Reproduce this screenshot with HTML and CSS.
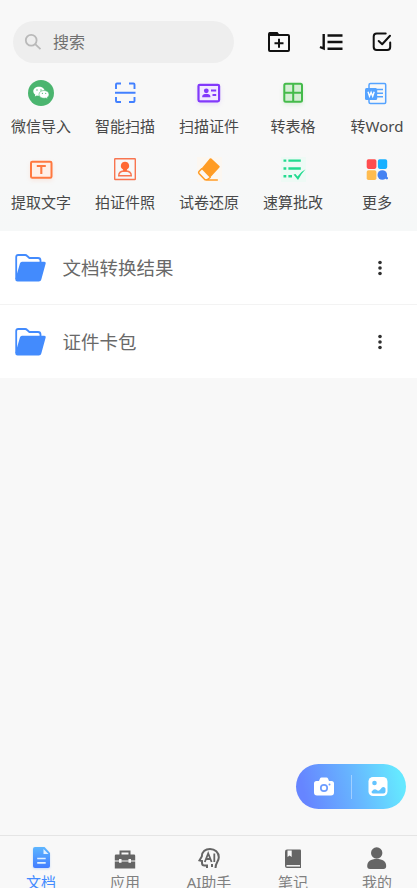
FILE: index.html
```html
<!DOCTYPE html>
<html lang="zh-CN">
<head>
<meta charset="utf-8">
<meta name="viewport" content="width=device-width, initial-scale=1">
<title>文档</title>
<link rel="stylesheet" href="styles.css">
</head>
<body>
<div class="app">
  <header class="top">
    <div class="toolbar">
      <div class="search">
        <svg width="18" height="18" viewBox="0 0 18 18" fill="none" stroke="#b9b9b9" stroke-width="1.8"><circle cx="7.2" cy="7.2" r="5.4"/><path d="M11.2 11.2L16.5 16.2"/></svg>
        <span>搜索</span>
      </div>
      <div class="actions">
        <svg width="24" height="24" viewBox="0 0 24 24" fill="none" stroke="#111" stroke-width="2"><path d="M2 5V20a1 1 0 0 0 1 1H21a1 1 0 0 0 1-1V6a1 1 0 0 0-1-1H11.500L10 3H3a1 1 0 0 0-1 1Z"/><path d="M2 2.500H9.500L12 6H2Z" fill="#111" stroke="none"/><path d="M12 8.700v9M7.500 13.200h9"/></svg>
        <svg width="24" height="24" viewBox="0 0 24 24" fill="none" stroke="#111" stroke-width="2.400"><path d="M4.700 4V18.500L1 17M8.500 5.500H23.500M8.500 12H23.500M8.500 18.700H23.500"/></svg>
        <svg width="24" height="24" viewBox="0 0 24 24" fill="none" stroke="#111" stroke-width="2" stroke-linecap="round" stroke-linejoin="round"><path d="M14.700 3.500H5.700a3 3 0 0 0-3 3v10.500a3 3 0 0 0 3 3H16.200a3 3 0 0 0 3-3V12.500"/><path d="M7.700 11l3.500 3.300L19 5.800"/></svg>
      </div>
    </div>
    <nav class="tools">
      <a class="tool"><svg viewBox="0 0 28 28"><circle cx="14" cy="14" r="13" fill="#4bb56f"/><path d="M12 7.800c-3.300 0-5.700 2-5.700 4.500 0 1.500.8 2.700 2 3.500l-.5 1.700 2-1c.7.200 1.400.3 2.200.3 3.200 0 5.700-2 5.700-4.500S15.200 7.800 12 7.800Z" fill="#fff"/><path d="M17 11.500c-2.900 0-5 1.700-5 3.900s2.100 3.900 5 3.900c.6 0 1.200-.1 1.800-.2l1.800.9-.5-1.500c1.200-.7 1.900-1.800 1.900-3.100 0-2.200-2.200-3.900-5-3.900Z" fill="#fff" stroke="#4bb56f" stroke-width=".6"/><g fill="#4bb56f"><circle cx="10" cy="11" r=".7"/><circle cx="14" cy="11" r=".7"/><circle cx="15.400" cy="14.300" r=".6"/><circle cx="18.700" cy="14.300" r=".6"/></g></svg><span>微信导入</span></a>
      <a class="tool"><svg viewBox="0 0 28 28" fill="none" stroke="#4280ff" stroke-width="1.900"><path d="M5 10V5.500q0-1 1-1h4M18 4.500h4.500q1 0 1 1V10M5 18v4q0 1 1 1h4M18 23h4.500q1 0 1-1v-4M4 13.800H24.500"/></svg><span>智能扫描</span></a>
      <a class="tool"><svg class="glow-purple" viewBox="0 0 28 28"><rect x="3.500" y="5.800" width="20.600" height="16.500" rx="1.300" fill="#f1e9ff" stroke="#8239fb" stroke-width="2.200"/><g fill="#8239fb"><circle cx="11.300" cy="11.800" r="2.400"/><path d="M7.200 18.300v-.8c0-2 1.800-2.500 4.100-2.500s4.100.5 4.100 2.500v.8ZM16 10.500h5.200v2H16ZM17.500 15h3.700v2h-3.700Z"/></g></svg><span>扫描证件</span></a>
      <a class="tool"><svg class="glow-green" viewBox="0 0 28 28" fill="#d5eed5" stroke="#45bb4b" stroke-width="2"><rect x="5.300" y="4.800" width="17.700" height="18" rx="1.500"/><path d="M14.200 5v18M5.500 13.800H23"/></svg><span>转表格</span></a>
      <a class="tool"><svg viewBox="0 0 28 28" fill="none" stroke="#55a3ff" stroke-width="1.500"><path d="M6 9V6q0-1.500 1.500-1.500H21.500q1.200 0 1.200 1.200V23.300q0 1.200-1.200 1.200H7.500Q6 24.500 6 23V20M14 10.600h6M14 14.200h6M14 17.800h6"/><rect x="2" y="9" width="12.200" height="12" rx="1.500" fill="#55a3ff" stroke="none"/><path d="M5 12.800l1.500 4.500 1.600-4 1.600 4 1.500-4.500" stroke="#fff" stroke-width="1.400"/></svg><span>转Word</span></a>
      <a class="tool"><svg class="glow-orange" viewBox="0 0 28 28" stroke="#ff7940"><rect x="4" y="6.800" width="20.500" height="16" rx="1.300" fill="#fff0e8" stroke-width="2"/><path d="M9.800 11h9M14.300 11v8" fill="none" stroke-width="2.100"/></svg><span>提取文字</span></a>
      <a class="tool"><svg viewBox="0 0 28 28" fill="none" stroke="#f87550" stroke-width="1.400"><rect x="3.700" y="3.700" width="20.600" height="20.800" rx=".5"/><path d="M7.700 20.700c0-3 2.200-4.700 6.300-4.700s6.300 1.700 6.300 4.700Z"/><path d="M14 6.700a4.100 4.100 0 0 1 2 7.700l-.4 2.200h-3.200l-.4-2.200a4.100 4.100 0 0 1 2-7.700Z" fill="#ff6934" stroke="none"/></svg><span>拍证件照</span></a>
      <a class="tool"><svg viewBox="0 0 28 28"><rect x="2" y="2" width="25" height="25" fill="#fff7ec" opacity=".6"/><path d="M14.800 3.500q.8-.7 1.600 0l8 7.500q.8.800 0 1.600L15 22.700 6.300 13.700Z" fill="#ff9c24"/><path d="M6.700 13.700L4 16.500q-.8 1 0 2L10 24.800H12L15.200 22.500M11 25H22.300" fill="none" stroke="#ff9c24" stroke-width="1.500" stroke-linecap="round"/></svg><span>试卷还原</span></a>
      <a class="tool"><svg viewBox="0 0 28 28" fill="none" stroke="#22db90" stroke-width="2.400"><rect x="2" y="2" width="25" height="25" fill="#e8fbf3" stroke="none" opacity=".6"/><path d="M4.500 5.600H7.300M9.400 5.600H21.800M4.500 13.500H7.300M9.400 13.500H21.800M4.500 21.300H7.300M9.400 21.300H13"/><path d="M14.500 19.500l2-.5 2 2.600Q21.300 17 26.500 14.300 22 19 19 25Z" fill="#22db90" stroke="none"/></svg><span>速算批改</span></a>
      <a class="tool"><svg viewBox="0 0 28 28"><rect x="3.700" y="4.200" width="9.700" height="9.700" rx="1.800" fill="#ff4d4f"/><rect x="14.900" y="4.200" width="9.300" height="9.700" rx="1.800" fill="#18b0ff"/><rect x="3.700" y="15.300" width="9.700" height="9.700" rx="1.800" fill="#ffbc50"/><circle cx="19.300" cy="20" r="4.800" fill="#4482f2"/><path d="M20.500 22l2.500-1.500 2 2.300q.4 1.700-1.300 1.700Z" fill="#4482f2"/></svg><span>更多</span></a>
    </nav>
  </header>

  <main class="files">
    <div class="file">
      <svg class="folder" viewBox="0 0 32 30"><path d="M2.200 26V4q0-2 2-2h7q1 0 2 1l2.200 2H24q2.500 0 2.500 2.500V11" fill="#fff" stroke="#438bfd" stroke-width="1.800"/><path d="M8 8.700H30q2.200 0 1.600 2L27.300 26.500Q26.800 28.500 24.800 28.500H3.500q-2.200 0-2.200-2L6 10.200Q6.500 8.700 8 8.700Z" fill="#438bfd"/></svg>
      <span class="name">文档转换结果</span>
      <svg class="more" viewBox="0 0 6 16" fill="#303030"><circle cx="3" cy="2.500" r="1.800"/><circle cx="3" cy="8" r="1.800"/><circle cx="3" cy="13.500" r="1.800"/></svg>
    </div>
    <div class="file">
      <svg class="folder" viewBox="0 0 32 30"><path d="M2.200 26V4q0-2 2-2h7q1 0 2 1l2.200 2H24q2.500 0 2.500 2.500V11" fill="#fff" stroke="#438bfd" stroke-width="1.800"/><path d="M8 8.700H30q2.200 0 1.600 2L27.300 26.500Q26.800 28.500 24.800 28.500H3.500q-2.200 0-2.200-2L6 10.200Q6.500 8.700 8 8.700Z" fill="#438bfd"/></svg>
      <span class="name">证件卡包</span>
      <svg class="more" viewBox="0 0 6 16" fill="#303030"><circle cx="3" cy="2.500" r="1.800"/><circle cx="3" cy="8" r="1.800"/><circle cx="3" cy="13.500" r="1.800"/></svg>
    </div>
  </main>

  <div class="capture">
    <svg width="22" height="22" viewBox="0 0 22 22"><path d="M7 2.500Q7.500 1.500 8.500 1.500h5q1 0 1.500 1L16 5h2.500Q21 5 21 7.500v9q0 3-3 3H4q-3 0-3-3v-9Q1 5 3.500 5H6Z" fill="#fff"/><circle cx="11" cy="12" r="3.200" fill="none" stroke="#6c9cff" stroke-width="1.700"/><circle cx="16.500" cy="8.500" r="1" fill="#6c9cff"/></svg>
    <i class="divider"></i>
    <svg width="22" height="22" viewBox="0 0 22 22"><rect x="1.500" y="1" width="19" height="19" rx="4.500" fill="#fff"/><circle cx="7.500" cy="7" r="2.300" fill="#62c4ff"/><path d="M4.500 15.800q2.800-3.800 5.300-1.700 2 1.600 3.900-1.200 2.300-3.500 4.800-.5v3q0 2-2 2H6q-1.500 0-1.500-1.600Z" fill="#62c4ff"/></svg>
  </div>

  <footer class="tabs">
    <a class="tab active"><svg viewBox="0 0 26 26"><defs><linearGradient id="doc" x2="0" y2="1"><stop stop-color="#5db6ff"/><stop offset="1" stop-color="#437dff"/></linearGradient></defs><path d="M7 2h9.500L22 8V21q0 2-2 2H7q-2 0-2-2V4q0-2 2-2Z" fill="url(#doc)"/><path d="M15.500 4v5H20.500Z" fill="#e2f1ff"/><path d="M9.200 13.500h8.500M9.200 17.800h8.500" stroke="#e2f1ff" stroke-width="1.700"/></svg><span>文档</span></a>
    <a class="tab"><svg viewBox="0 0 26 26"><path d="M8.500 10V6.500H17.500V10" fill="none" stroke="#656565" stroke-width="2"/><path d="M4 9.500H22q1.200 0 1.200 1.200V15.500H19V14h-2.500v1.500h-7V14H7v1.500H2.800V10.700Q2.800 9.500 4 9.500ZM2.800 16.500H7v1.200h2.500V16.500h7v1.200H19V16.500h4.200v7H2.800Z" fill="#656565"/></svg><span>应用</span></a>
    <a class="tab"><svg viewBox="0 0 26 26" fill="none" stroke="#656565" stroke-width="2"><path d="M11 23v-2.500H8.500Q6 20.500 6 18V16L3.500 15.300 5.800 11.500C6 6.500 9.500 4 14 4c5 0 8.800 3.500 8.800 8.300 0 4-3.300 5-3.300 10.700M16 19v3"/><path d="M8.800 17l3.400-8.500 3.400 8.500M10.300 14h4M18.300 8.500V17" stroke-width="1.800"/></svg><span>AI助手</span></a>
    <a class="tab"><svg viewBox="0 0 26 26"><path d="M7 4.500H20q1 0 1 1V23H7q-2 0-2-2V6.500q0-2 2-2Z" fill="#656565"/><path d="M7.500 5.500h4.200v6.500l-2.100-1.400-2.100 1.400Z" fill="#f8f8f8"/><path d="M6.500 20.800H20" stroke="#f8f8f8" stroke-width="1.500"/></svg><span>笔记</span></a>
    <a class="tab"><svg viewBox="0 0 26 26" fill="#656565"><circle cx="12.700" cy="8" r="5.700"/><path d="M3.200 21c0-4.500 3.500-7 9.500-7s9.500 2.500 9.500 7q0 3-2.800 3H6q-2.800 0-2.800-3Z"/></svg><span>我的</span></a>
  </footer>
</div>
</body>
</html>
```
FILE: styles.css
```css
* { box-sizing: border-box; }
body {
  margin: 0;
  background: #f8f8f8;
  font-family: "Noto Sans", "Noto Sans CJK SC", sans-serif;
  color: #484848;
}
svg { display: block; flex: none; }
.app {
  height: 888px;
  display: flex;
  flex-direction: column;
  overflow: hidden;
  position: relative;
}
.top {
  height: 231px;
  padding-top: 21px;
  background: linear-gradient(#f8f8f8 60%, #f6f8f8);
}
.toolbar {
  display: flex;
  align-items: center;
  height: 42px;
  padding-left: 13px;
}
.search {
  display: flex;
  align-items: center;
  gap: 11px;
  width: 221px;
  height: 42px;
  padding-left: 11px;
  border-radius: 21px;
  background: #eee;
  color: #707070;
  font-size: 16px;
  line-height: 24px;
}
.actions {
  display: flex;
  gap: 28px;
  margin-left: 33px;
}
.tools {
  display: grid;
  grid-template-columns: repeat(5, 84px);
  grid-auto-rows: 76px;
  margin: 16px 0 0 -1px;
}
.tool, .tab {
  display: flex;
  flex-direction: column;
  align-items: center;
  white-space: nowrap;
}
.tool svg { width: 28px; height: 28px; }
.tool span {
  margin-top: 8px;
  font-size: 15px;
  line-height: 22px;
}
.glow-purple { filter: drop-shadow(0 2px 2px #8239fb20); }
.glow-green { filter: drop-shadow(0 2px 2px #45bb4b28); }
.glow-orange { filter: drop-shadow(0 2px 2px #ff794020); }
.file {
  display: flex;
  align-items: center;
  height: 74px;
  padding: 0 34px 0 14px;
  background: #fff;
  border-bottom: 1px solid #f3f3f3;
}
.file:last-child { height: 73px; border-bottom: 0; }
.folder { width: 32px; height: 30px; }
.name {
  flex: 1;
  margin-left: 16.500px;
  font-size: 18.500px;
  line-height: 28px;
  color: #696969;
}
.more { width: 6px; height: 16px; }
.capture {
  position: absolute;
  left: 296px;
  top: 764px;
  width: 110px;
  height: 45px;
  padding: 0 17px;
  border-radius: 23px;
  display: flex;
  align-items: center;
  justify-content: space-between;
  background: linear-gradient(75deg, #6685ff 10%, #67b8ff 55%, #65e8ff 92%);
}
.divider { width: 1px; height: 24px; background: #ffffff60; }
.tabs {
  display: grid;
  grid-template-columns: repeat(5, 84px);
  height: 53px;
  margin: auto -2px 0 -1px;
  padding-top: 9px;
  border-top: 1px solid #e5e5e5;
  color: #808080;
}
.tab svg { width: 26px; height: 26px; }
.tab span {
  font-size: 15px;
  line-height: 22px;
}
.active { color: #438bff; }
.active svg { filter: drop-shadow(0 1px 1px #438bff40); }
```
